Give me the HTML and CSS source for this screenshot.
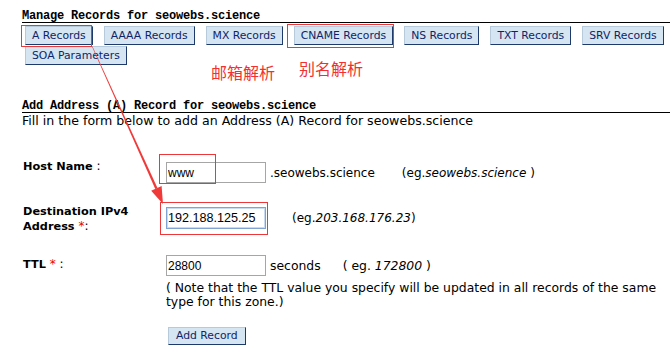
FILE: index.html
```html
<!DOCTYPE html>
<html lang="en">
<head>
  <meta charset="UTF-8" />
  <title>Manage Records for seowebs.science</title>
  <link rel="stylesheet" href="styles.css">
</head>
<body>

  <div class="page">
    <h2 class="section-title">Manage Records for seowebs.science</h2>

    <!-- Record type tabs -->
    <div class="record-tabs">
      <button class="btn">A Records</button>
      <button class="btn">AAAA Records</button>
      <button class="btn">MX Records</button>
      <button class="btn">CNAME Records</button>
      <button class="btn">NS Records</button>
      <button class="btn">TXT Records</button>
      <button class="btn">SRV Records</button>
      <button class="btn">SOA Parameters</button>
    </div>

    <h2 class="section-title add-title">Add Address (A) Record for seowebs.science</h2>
    <p class="intro">Fill in the form below to add an Address (A) Record for seowebs.science</p>

    <!-- Add record form -->
    <form class="record-form" onsubmit="return false">
      <div class="form-row">
        <label class="field-label" for="hostName"><b>Host Name</b> :</label>
        <div class="field">
          <input class="text-input" id="hostName" type="text" value="www" />
          <span class="suffix">.seowebs.science</span>
          <span class="hint host-hint">(eg.<i>seowebs.science</i> )</span>
        </div>
      </div>

      <div class="form-row">
        <label class="field-label" for="ipAddr"><b>Destination IPv4<br>Address</b> <span class="req">*</span>:</label>
        <div class="field">
          <input class="text-input focused" id="ipAddr" type="text" value="192.188.125.25" />
          <span class="hint ip-hint">(eg.<i>203.168.176.23</i>)</span>
        </div>
      </div>

      <div class="form-row ttl-row">
        <label class="field-label" for="ttl"><b>TTL</b> <span class="req">*</span> :</label>
        <div class="field-stack">
          <div class="field">
            <input class="text-input" id="ttl" type="text" value="28800" />
            <span class="unit">seconds</span>
            <span class="unit ttl-hint">( eg. <i>172800</i> )</span>
          </div>
          <p class="ttl-note">( Note that the TTL value you specify will be updated in all records of the same<br>type for this zone.)</p>
          <button class="btn add-btn" type="submit">Add Record</button>
        </div>
      </div>
    </form>

    <!-- Annotations drawn over the screenshot -->
    <div class="mark mark-a"></div>
    <div class="mark mark-cname"></div>
    <div class="mark mark-host"></div>
    <div class="mark mark-ip"></div>
    <span class="cn-note cn-mx">邮箱解析</span>
    <span class="cn-note cn-cname">别名解析</span>
    <svg class="arrow" width="670" height="349" viewBox="0 0 670 349">
      <polygon fill="#f03a3a" points="91.6,45.8 92.4,46.2 157.6,188.2 155.3,189.0" />
      <polygon fill="#f03a3a" points="163,204 151.2,190.8 161.6,186.0" />
    </svg>
  </div>

</body>
</html>
```

FILE: styles.css
```css
* {
  box-sizing: border-box;
}

body {
  margin: 0;
  background: #fff;
  color: #000;
  font-family: 'DejaVu Sans', Verdana, sans-serif;
  overflow: hidden;
}

.page {
  position: relative;
  height: 349px;
  padding-left: 22px;
}

.section-title {
  margin: 0;
  padding-top: 11px;
  font-family: 'Liberation Mono', 'Courier New', monospace;
  font-size: 12px;
  letter-spacing: -0.2px;
  line-height: 11px;
  font-weight: bold;
  border-bottom: 1px solid #000;
}

.add-title {
  margin-top: 25px;
}

.record-tabs {
  display: flex;
  flex-wrap: wrap;
  column-gap: 11px;
  row-gap: 1px;
  margin-top: 3px;
  padding-left: 3px;
  width: 660px;
}

.btn {
  height: 19px;
  padding: 0 6px;
  background: #d5e5f1;
  border: 1px solid;
  border-color: #b7cadb #1d3a6b #1d3a6b #b7cadb;
  color: #0f2468;
  font-family: 'DejaVu Sans', Verdana, sans-serif;
  font-size: 10.8px;
  line-height: 16px;
  cursor: pointer;
}

.intro {
  margin: 0;
  font-size: 12.6px;
  line-height: 15px;
}

.record-form {
  margin-top: 31px;
}

.form-row {
  display: grid;
  grid-template-columns: 144px auto;
  align-items: start;
  margin-bottom: 21px;
}

.field-label {
  padding-left: 1px;
  font-size: 12px;
  line-height: 15px;
}

.field-label b {
  font-size: 11.3px;
}

.req {
  color: #e00;
}

.field {
  display: flex;
  align-items: baseline;
  padding-top: 3px;
}

.text-input {
  width: 100px;
  height: 21px;
  padding: 0 1px;
  border: 1px solid #a6a6a6;
  font-family: 'Liberation Sans', Arial, sans-serif;
  font-size: 12px;
  color: #000;
  outline: none;
}

.text-input.focused {
  height: 22px;
  font-size: 12.6px;
  border-color: #7fa3d4;
  box-shadow: inset 0 0 0 1px #c9dbf1;
}

.suffix,
.hint {
  font-size: 12px;
  line-height: 15px;
}

.suffix {
  margin-left: 4px;
}

.host-hint {
  margin-left: 27px;
}

.ip-hint {
  margin-left: 26px;
}

.ttl-row .field {
  padding-top: 0;
}

.ttl-row .field-label {
  padding-top: 2px;
}

.unit,
.ttl-note {
  font-size: 12.4px;
  line-height: 14px;
}

.unit {
  margin-left: 4px;
}

.ttl-hint {
  margin-left: 22px;
}

.ttl-note {
  margin: 5px 0 0;
  white-space: nowrap;
}

.add-btn {
  margin: 18px 0 0 2px;
  padding: 0 7px;
  height: 18px;
}

/* annotation layer */
.mark {
  position: absolute;
  border: 1px solid #ec3838;
}

.mark-a {
  left: 21px;
  top: 25px;
  width: 71px;
  height: 22px;
}

.mark-cname {
  left: 287px;
  top: 24px;
  width: 107px;
  height: 24px;
}

.mark-host {
  left: 159px;
  top: 154px;
  width: 57px;
  height: 30px;
}

.mark-ip {
  left: 160px;
  top: 202px;
  width: 108px;
  height: 33px;
}

.cn-note {
  position: absolute;
  color: #f23030;
  font-family: 'Noto Sans CJK SC', sans-serif;
  font-size: 16px;
  line-height: 16px;
}

.cn-mx {
  left: 211px;
  top: 64px;
}

.cn-cname {
  left: 299px;
  top: 60px;
}

.arrow {
  position: absolute;
  left: 0;
  top: 0;
  pointer-events: none;
}
```
